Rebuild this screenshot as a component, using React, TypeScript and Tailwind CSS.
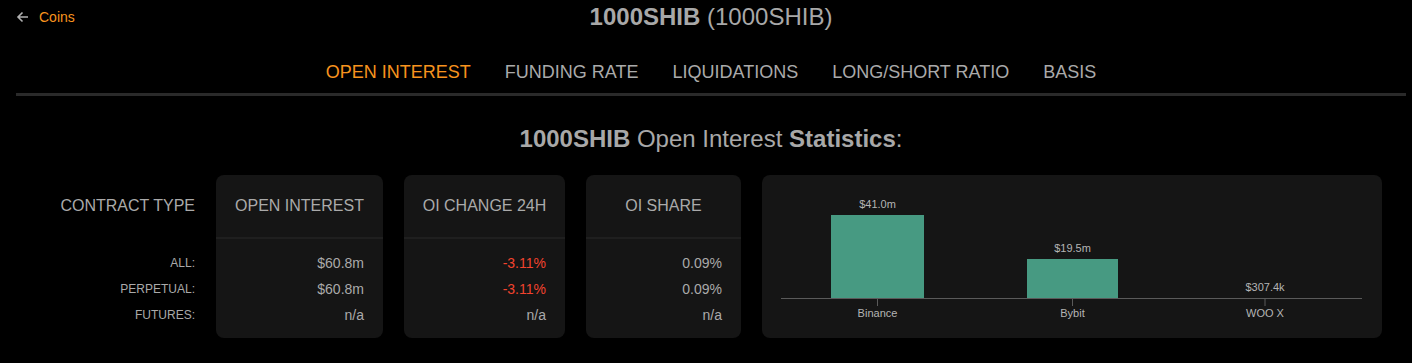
import React from "react";

const font = { fontFamily: '"Liberation Sans", Arial, Helvetica, sans-serif' };

const tabs = ["OPEN INTEREST", "FUNDING RATE", "LIQUIDATIONS", "LONG/SHORT RATIO", "BASIS"];

type Col = { title: string; w: string; values: { v: string; red?: boolean }[] };

const cols: Col[] = [
  { title: "OPEN INTEREST", w: "w-[167px]", values: [{ v: "$60.8m" }, { v: "$60.8m" }, { v: "n/a" }] },
  { title: "OI CHANGE 24H", w: "w-[161px]", values: [{ v: "-3.11%", red: true }, { v: "-3.11%", red: true }, { v: "n/a" }] },
  { title: "OI SHARE", w: "w-[155px]", values: [{ v: "0.09%" }, { v: "0.09%" }, { v: "n/a" }] },
];

function Chart() {
  const bars = [
    { name: "Binance", label: "$41.0m", x: 69, w: 93, top: 40, cx: 115.5 },
    { name: "Bybit", label: "$19.5m", x: 265, w: 91, top: 84, cx: 310.5 },
    { name: "WOO X", label: "$307.4k", x: 457, w: 92, top: 123, cx: 503 },
  ];
  return (
    <svg width="620" height="163" viewBox="0 0 620 163" className="block">
      {bars.map((b) => (
        <g key={b.name}>
          {123 - b.top > 0.5 && (
            <rect x={b.x} y={b.top} width={b.w} height={123 - b.top} fill="#479a82" />
          )}
          <text x={b.cx} y={b.top - 7} textAnchor="middle" fontSize="11" fill="#b4b4b4" style={font}>
            {b.label}
          </text>
          <line x1={b.cx} y1={123} x2={b.cx} y2={131} stroke="#5a5a5a" strokeWidth="1" />
          <text x={b.cx} y={142} textAnchor="middle" fontSize="11" fill="#b4b4b4" style={font}>
            {b.name}
          </text>
        </g>
      ))}
      <line x1={19} y1={123.5} x2={600} y2={123.5} stroke="#5a5a5a" strokeWidth="1" />
    </svg>
  );
}

export default function App() {
  return (
    <div className="w-[1412px] h-[363px] bg-black text-[#aaaaaa] overflow-hidden pl-[16px] pr-[6px]" style={font}>
      {/* header */}
      <div className="grid grid-cols-[1fr_auto_1fr] items-center h-[34px]">
        <div className="flex items-center gap-[10px] text-[14px]">
          <svg width="13" height="12" viewBox="0 0 13 12" fill="none" stroke="#b0b0b0" strokeWidth="1.6">
            <path d="M12 6H2M6.5 1.5L2 6l4.5 4.5" />
          </svg>
          <span className="text-[#f7931e]">Coins</span>
        </div>
        <div className="text-[24px] leading-[34px] text-[#a8a8a8]">
          <span className="font-bold">1000SHIB</span> (1000SHIB)
        </div>
        <div />
      </div>

      {/* tabs */}
      <div className="pt-[26px] pb-[9px] border-b-[3px] border-[#2a2a2a] flex justify-center gap-[34px] text-[18px] leading-[24px]">
        {tabs.map((t, i) => (
          <span key={t} className={i === 0 ? "text-[#f7931e]" : "text-[#aaaaaa]"}>
            {t}
          </span>
        ))}
      </div>

      {/* heading */}
      <div className="mt-[29px] text-center text-[24px] leading-[28px] text-[#a8a8a8]">
        <span className="font-bold">1000SHIB</span> Open Interest <span className="font-bold">Statistics</span>:
      </div>

      {/* stats */}
      <div className="mt-[22px] flex gap-[21px]">
        <div className="w-[179px] text-right">
          <div className="h-[62px] flex items-center justify-end text-[16px]">CONTRACT TYPE</div>
          <div className="pt-[13px] text-[12px]">
            <div className="h-[26px] leading-[26px]">ALL:</div>
            <div className="h-[26px] leading-[26px]">PERPETUAL:</div>
            <div className="h-[26px] leading-[26px]">FUTURES:</div>
          </div>
        </div>
        {cols.map((c) => (
          <div key={c.title} className={`${c.w} h-[163px] bg-[#151515] rounded-[8px]`}>
            <div className="h-[62px] flex items-center justify-center text-[16px]">{c.title}</div>
            <div className="h-[2px] bg-[#1f1f1f]" />
            <div className="pt-[11px] pr-[19px] text-right text-[14px]">
              {c.values.map((v, i) => (
                <div key={i} className={`h-[26px] leading-[26px] ${v.red ? "text-[#f2432e]" : ""}`}>
                  {v.v}
                </div>
              ))}
            </div>
          </div>
        ))}
        <div className="w-[620px] h-[163px] bg-[#151515] rounded-[8px]">
          <Chart />
        </div>
      </div>
    </div>
  );
}
